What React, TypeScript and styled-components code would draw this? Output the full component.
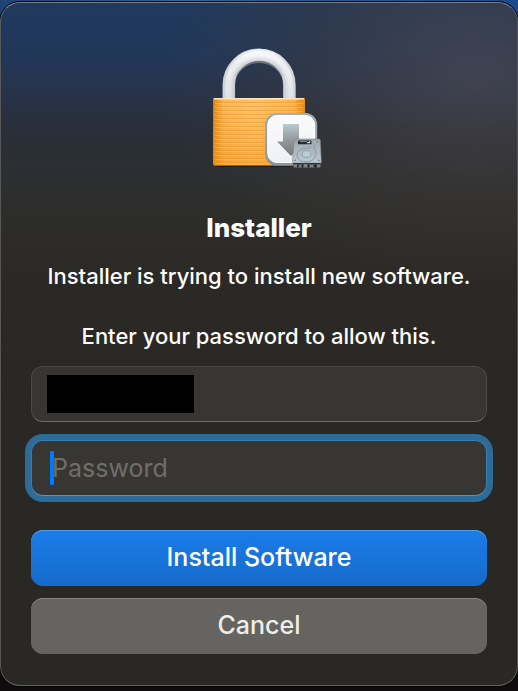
import React from "react";
import styled, { createGlobalStyle, css } from "styled-components";

const GlobalStyle = createGlobalStyle`
  * { box-sizing: border-box; }
  html, body, #root { height: 100%; }
  body {
    margin: 0;
    font-family: Inter, "Liberation Sans", sans-serif;
    color: #fff;
    background: linear-gradient(90deg, #1f4275, #35678f 35%, #2a5a90 60%, #1d4a8c) top / 100% 40px no-repeat, #0d0b0b;
  }
`;

const Desktop = styled.main`
  min-height: 100%;
  padding: 2px 0 5px;
`;

const Dialog = styled.form`
  display: flex;
  flex-direction: column;
  padding: 41px 30px 31px;
  border: 1px solid;
  border-color: #77808a #575757 #62625f #575757;
  border-radius: 20px;
  box-shadow: 0 0 0 1px #050505;
  background:
    radial-gradient(ellipse 60% 32% at 92% 10%, rgba(76, 72, 80, 0.7), rgba(64, 59, 57, 0.4) 55%, rgba(52, 49, 46, 0) 100%),
    linear-gradient(#20395d 0, #21375a 50px, #27334a 90px, #2a2e37 130px, #2c2f32 165px, #2d2d2a 210px, #2b2926 280px, #292825 400px, #292825 100%);
`;

const LockArt = styled.svg`
  display: block;
  width: 128px;
  height: 128px;
  margin: 0 auto;
`;

const Title = styled.h1`
  margin: 40px 0 0;
  font-size: 26px;
  line-height: 32px;
  font-weight: 800;
  text-align: center;
`;

const Message = styled.p`
  margin: 17px 0 0;
  font-size: 22px;
  line-height: 30px;
  font-weight: 500;
  text-align: center;
`;

const Fields = styled.div`
  display: grid;
  gap: 18px;
  margin-top: 15px;
`;

const fieldBox = css`
  width: 100%;
  height: 56px;
  padding: 0 15px;
  border: 1px solid;
  border-color: #4a4947 #4c4b49 #6c6b68;
  border-radius: 12px;
  background: #383633;
`;

const UserField = styled.div`
  ${fieldBox}
  display: flex;
  align-items: center;
`;

const UserInput = styled.input`
  width: 147px;
  height: 38px;
  padding: 0;
  border: 0;
  outline: 0;
  background: #000;
  color: #000;
  font: 400 25px Inter, sans-serif;
`;

const PasswordField = styled.div`
  ${fieldBox}
  display: flex;
  align-items: center;
  padding: 0 18px;
  border-color: #3c7cad #3c7cad #5794bf;
  box-shadow: 0 0 0 6px #2d6b98;
`;

const Caret = styled.span`
  width: 4px;
  height: 34px;
  margin-right: -2px;
  border-radius: 1px;
  background: #007aff;
`;

const PasswordInput = styled.input`
  flex: 1;
  min-width: 0;
  height: 40px;
  padding: 0;
  border: 0;
  outline: 0;
  background: transparent;
  color: #fff;
  caret-color: #007aff;
  font: 400 25px Inter, sans-serif;

  &::placeholder { color: #6f6e6b; opacity: 1; }
`;

const Actions = styled.div`
  display: grid;
  gap: 12px;
  margin-top: 34px;
`;

const Button = styled.button<{ $primary?: boolean }>`
  width: 100%;
  height: 56px;
  padding: 0 16px 3px;
  border: 0;
  border-radius: 12px;
  font: 500 25px Inter, sans-serif;
  color: ${(p) => (p.$primary ? "#fff" : "#eeeeeb")};
  background: ${(p) => (p.$primary ? "linear-gradient(#1b7ce9, #166bcb)" : "#656460")};
  box-shadow: inset 0 1px 0 ${(p) => (p.$primary ? "#529bf0" : "#858480")};
`;

function InstallerLock() {
  const ridges = Array.from({ length: 16 }, (_, i) => 58 + i * 4);
  return (
    <LockArt viewBox="0 0 128 128" aria-hidden="true">
      <defs>
        <linearGradient id="steel" x1="0" y1="4" x2="0" y2="55" gradientUnits="userSpaceOnUse">
          <stop offset="0" stopColor="#f1f2f5" />
          <stop offset=".35" stopColor="#d3d5da" />
          <stop offset="1" stopColor="#cfd3d9" />
        </linearGradient>
        <linearGradient id="shine" x1="0" y1="4" x2="0" y2="55" gradientUnits="userSpaceOnUse">
          <stop offset="0" stopColor="#fff" />
          <stop offset="1" stopColor="#e4e7eb" />
        </linearGradient>
        <linearGradient id="brass">
          <stop offset="0" stopColor="#d87e0b" />
          <stop offset=".05" stopColor="#ed9b2b" />
          <stop offset=".12" stopColor="#fcb759" />
          <stop offset=".45" stopColor="#ffc36c" />
          <stop offset=".88" stopColor="#fdb44e" />
          <stop offset=".95" stopColor="#ee9420" />
          <stop offset="1" stopColor="#e48b19" />
        </linearGradient>
        <linearGradient id="depth" x1="0" y1="0" x2="0" y2="1">
          <stop offset="0" stopColor="#f5a329" stopOpacity="0" />
          <stop offset="1" stopColor="#ef8e12" stopOpacity=".5" />
        </linearGradient>
        <linearGradient id="tile" x1="0" y1="0" x2="0" y2="1">
          <stop offset="0" stopColor="#fbfbfd" />
          <stop offset="1" stopColor="#edf0f4" />
        </linearGradient>
        <linearGradient id="rim" x1="0" y1="0" x2="0" y2="1">
          <stop offset="0" stopColor="#9fb0b8" />
          <stop offset="1" stopColor="#8c969f" />
        </linearGradient>
        <linearGradient id="arrow" x1="0" y1="0" x2="0" y2="1">
          <stop offset="0" stopColor="#b9cbd1" />
          <stop offset=".5" stopColor="#949a9d" />
          <stop offset="1" stopColor="#757474" />
        </linearGradient>
        <linearGradient id="disk" x1="0" y1="0" x2="0" y2="1">
          <stop offset="0" stopColor="#9ca8ae" />
          <stop offset="1" stopColor="#bccbd1" />
        </linearGradient>
      </defs>

      <path d="M33.8 56V41a30.3 30.3 0 0 1 60.6 0v15" fill="none" stroke="#a4a9b2" strokeWidth="12.6" />
      <path d="M33.8 56V41a30.3 30.3 0 0 1 60.6 0v15" fill="none" stroke="url(#steel)" strokeWidth="11.8" />
      <path d="M33.4 54V41a30.7 30.7 0 0 1 61.4 0v13" fill="none" stroke="url(#shine)" strokeWidth="7" opacity=".5" />
      <path d="M32.8 54V41a31.3 31.3 0 0 1 62.6 0v13" fill="none" stroke="url(#shine)" strokeWidth="4" opacity=".5" />
      <path d="M41 32a26 26 0 0 1 46.200 0" fill="none" stroke="#a9abb3" strokeWidth="2" opacity=".5" />

      <path d="M20 121h88v2H23z" fill="#171615" opacity=".7" />
      <path d="M19 54h90q1 0 1 1v64q0 3-3 3H21q-3 0-3-3V55q0-1 1-1z" fill="url(#brass)" />
      <path d="M18 54h92v65q0 3-3 3H21q-3 0-3-3z" fill="url(#depth)" />
      <path d="M19 54.7h90" stroke="#ffe5b7" strokeWidth="1.4" />
      {ridges.map((y) => (
        <g key={y}>
          <path d={`M19 ${y + 0.5}h90`} stroke="#e79427" strokeWidth="1" opacity=".5" />
          <path d={`M20 ${y + 1.5}h88`} stroke="#ffd58d" strokeWidth="1" opacity=".35" />
        </g>
      ))}
      <path d="M19 121.500h89" stroke="#a4651a" strokeWidth="1" />

      <rect x="70.2" y="69" width="52" height="53" rx="12" fill="#7d858d" opacity=".8" />
      <rect x="71.3" y="70" width="49.8" height="50" rx="11" fill="url(#tile)" stroke="url(#rim)" strokeWidth="2" />
      <rect x="72.8" y="71.5" width="46.8" height="47" rx="9.5" fill="none" stroke="#fff" strokeWidth="1" opacity=".8" />
      <path d="M88 80h16v17.5h6L96 112 82 97.5h6z" fill="url(#arrow)" />

      <path d="M98 117h28v5q0 2-2 2h-24q-2 0-2-2z" fill="#55595b" />
      <path d="M100 95h24q1 0 1.3 1l1 22q0 1-1 1H98.500q-1 0-1-1L99 96q0-1 1-1z" fill="url(#disk)" stroke="#77838a" strokeWidth=".6" />
      <rect x="103" y="96.5" width="13.5" height="3.8" rx=".5" fill="#252b30" />
      <path d="M105 97.6h7" stroke="#929ba0" strokeWidth=".8" />
      <path d="M112 98.7h2.800v-1.500" fill="none" stroke="#fff" strokeWidth="1" />
      <path d="M116.500 102.500C114 105.500 109 103 104.500 106.500c-5 4-2.500 10.800 5.500 11.300 8 .4 12.500-5 10.500-10.800-.8-2.300-2-3.500-1.500-5.500" fill="none" stroke="#82929a" strokeWidth=".8" />
      <ellipse cx="111.500" cy="110" rx="4.300" ry="3.300" fill="#bdcdd3" stroke="#81929a" strokeWidth=".7" />
      <path d="M99.500 116.500l1.500-.5M124.500 116.500l-1.500-.5M101 97.500v1M122.500 97.500v1" stroke="#59656c" strokeWidth="1" />
      <path d="M98.500 119.6h27" stroke="#303335" strokeWidth="1" />
      <path d="M99 120.500h3v2.500h-3zM104 121h2v2h-2zM109 120h3v3h-3zM115 121h3v2h-3zM122 120.500h3v2.500h-3z" fill="#7d8385" />
      <path d="M102.500 120.500h1v3h-1zM107 120.500h1v3h-1zM113 120.500h1v3h-1zM119.500 120.500h2v3h-2z" fill="#1d1f20" />
    </LockArt>
  );
}

export default function App() {
  return (
    <>
      <GlobalStyle />
      <Desktop>
        <Dialog role="dialog" aria-labelledby="title" onSubmit={(e) => e.preventDefault()}>
          <InstallerLock />
          <Title id="title">Installer</Title>
          <Message>
            Installer is trying to install new software.
            <br />
            <br />
            Enter your password to allow this.
          </Message>
          <Fields>
            <UserField>
              <UserInput type="text" aria-label="User name" autoComplete="off" />
            </UserField>
            <PasswordField>
              <Caret />
              <PasswordInput type="password" placeholder="Password" aria-label="Password" />
            </PasswordField>
          </Fields>
          <Actions>
            <Button type="submit" $primary>Install Software</Button>
            <Button type="button">Cancel</Button>
          </Actions>
        </Dialog>
      </Desktop>
    </>
  );
}
